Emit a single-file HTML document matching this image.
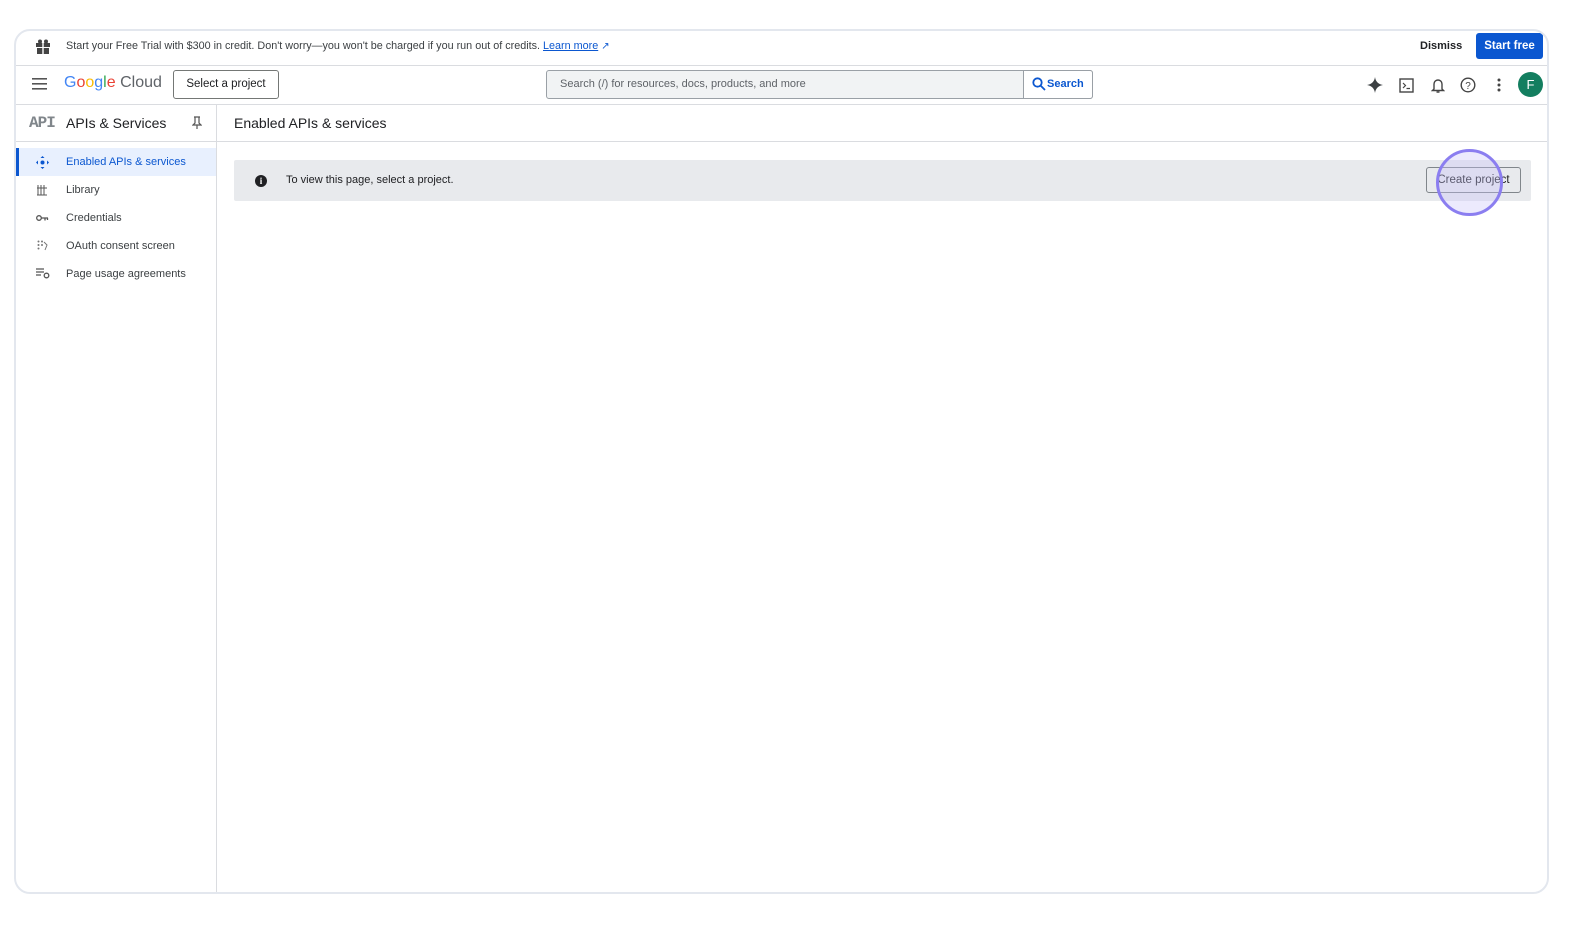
<!DOCTYPE html>
<html><head><style>
*{box-sizing:border-box;margin:0;padding:0}
body{width:1596px;height:942px;background:#fff;font-family:"Liberation Sans",Arial,sans-serif;position:relative;overflow:hidden;color:#3c4043}
.frame{position:absolute;left:14px;top:29px;width:1535px;height:865px;border:2px solid #e3e7ee;border-radius:16px;overflow:hidden;background:#fff}
.abs{position:absolute}
.t{font-size:11px;color:#3c4043;white-space:nowrap}
.hl{position:absolute;left:0;right:0;height:1px;background:#dadce0}
</style></head><body>
<div class="frame">
 <svg class="abs" style="left:19px;top:8px" width="16" height="16" viewBox="0 0 16 16"><rect x="1" y="4" width="14" height="4" fill="#444"/><rect x="2" y="9" width="12" height="6" fill="#444"/><rect x="7.3" y="3" width="1.4" height="13" fill="#fff"/><circle cx="5" cy="2.5" r="2" fill="#444"/><circle cx="11" cy="2.5" r="2" fill="#444"/></svg>
 <div class="abs t" style="left:50px;top:9px;font-size:10.8px">Start your Free Trial with $300 in credit. Don't worry—you won't be charged if you run out of credits. <span style="color:#0b57d0;text-decoration:underline">Learn more</span> <span style="color:#0b57d0;font-size:10px">↗</span></div>
 <div class="abs t" style="left:1404px;top:9px;color:#202124;font-weight:bold">Dismiss</div>
 <div class="abs" style="left:1460px;top:2px;width:67px;height:26px;background:#0b57d0;border-radius:3px;color:#fff;font-size:11.5px;font-weight:bold;text-align:center;line-height:26px">Start free</div>
 <div class="hl" style="top:34px"></div>
 <svg class="abs" style="left:16px;top:47px" width="16" height="12"><rect y="0" width="15" height="1.6" fill="#555"/><rect y="5" width="15" height="1.6" fill="#555"/><rect y="10" width="15" height="1.6" fill="#555"/></svg>
 <div class="abs" style="left:48px;top:43px;font-size:16px;white-space:nowrap"><span style="color:#4285f4">G</span><span style="color:#ea4335">o</span><span style="color:#fbbc04">o</span><span style="color:#4285f4">g</span><span style="color:#34a853">l</span><span style="color:#ea4335">e</span> <span style="color:#5f6368">Cloud</span></div>
 <div class="abs" style="left:157px;top:39px;width:106px;height:29px;border:1px solid #747775;border-radius:3px;font-size:11.5px;color:#202124;text-align:center;line-height:27px">Select a project</div>
 <div class="abs" style="left:530px;top:39px;width:547px;height:29px;border:1px solid #9aa0a6;border-radius:3px;background:#f1f3f4"></div>
 <div class="abs t" style="left:544px;top:47px;color:#5f6368">Search (/) for resources, docs, products, and more</div>
 <div class="abs" style="left:1007px;top:39px;width:70px;height:29px;border:1px solid #9aa0a6;border-radius:0 3px 3px 0;background:#fff"></div>
 <svg class="abs" style="left:1016px;top:46px" width="14" height="14"><circle cx="5.5" cy="5.5" r="4.2" fill="none" stroke="#0b57d0" stroke-width="1.8"/><line x1="8.5" y1="8.5" x2="13" y2="13" stroke="#0b57d0" stroke-width="1.8"/></svg>
 <div class="abs t" style="left:1031px;top:47px;color:#0b57d0;font-weight:bold">Search</div>
 <svg class="abs" style="left:1351px;top:46px" width="16" height="16" viewBox="0 0 16 16"><path d="M8 0C8.6 4.5 11.5 7.4 16 8 11.5 8.6 8.6 11.5 8 16 7.4 11.5 4.5 8.6 0 8 4.5 7.4 7.4 4.5 8 0Z" fill="#3c4043"/></svg>
 <svg class="abs" style="left:1383px;top:47px" width="15" height="15"><rect x="1" y="1" width="13" height="13" fill="none" stroke="#444" stroke-width="1.4"/><path d="M4 5l2.5 2.5L4 10M7.5 10.5h3.5" fill="none" stroke="#444" stroke-width="1.2"/></svg>
 <svg class="abs" style="left:1415px;top:46px" width="14" height="17"><path d="M3 12V7a4 4 0 0 1 8 0v5l1.5 1.5h-11Z" fill="none" stroke="#444" stroke-width="1.4"/><path d="M5.5 15h3" stroke="#444" stroke-width="1.4"/></svg>
 <svg class="abs" style="left:1444px;top:46px" width="16" height="16"><circle cx="8" cy="8" r="6.8" fill="none" stroke="#444" stroke-width="1.4"/><text x="8" y="12" font-size="10" text-anchor="middle" fill="#444" font-family="Liberation Sans">?</text></svg>
 <svg class="abs" style="left:1481px;top:47px" width="4" height="14"><circle cx="2" cy="2" r="1.5" fill="#444"/><circle cx="2" cy="7" r="1.5" fill="#444"/><circle cx="2" cy="12" r="1.5" fill="#444"/></svg>
 <div class="abs" style="left:1502px;top:41px;width:25px;height:25px;border-radius:50%;background:#137e5f;color:#fff;font-size:13px;text-align:center;line-height:25px">F</div>
 <div class="hl" style="top:73px"></div>
 <div class="abs" style="left:200px;top:73px;width:1px;height:800px;background:#dadce0"></div>
 <div class="abs" style="left:13px;top:83px;font-size:16px;font-weight:bold;color:#80868b;font-family:'Liberation Mono',monospace;letter-spacing:-1px">API</div>
 <div class="abs" style="left:50px;top:84px;font-size:14px;color:#202124;white-space:nowrap">APIs &amp; Services</div>
 <svg class="abs" style="left:176px;top:85px" width="10" height="13"><path d="M2 1h6M3 1v6L1 9h8L7 7V1M5 9v4" fill="none" stroke="#555" stroke-width="1.2"/></svg>
 <div class="abs" style="left:0;top:110px;width:200px;height:1px;background:#dadce0"></div>
 <div class="abs" style="left:201px;top:110px;right:0;height:1px;background:#dadce0"></div>
 <div class="abs" style="left:218px;top:84px;font-size:14px;color:#202124;white-space:nowrap">Enabled APIs &amp; services</div>
 <div class="abs" style="left:0;top:117px;width:200px;height:28px;background:#e8f0fe;border-left:3px solid #0b57d0"></div>
 <svg class="abs" style="left:20px;top:125px" width="13" height="13"><circle cx="6.5" cy="6.5" r="2" fill="#0b57d0"/><path d="M6.5 0l2 2h-4zM6.5 13l2-2h-4zM0 6.5l2-2v4zM13 6.5l-2-2v4z" fill="#0b57d0"/></svg>
 <div class="abs t" style="left:50px;top:125px;color:#0b57d0">Enabled APIs &amp; services</div>
 <svg class="abs" style="left:21px;top:153px" width="10" height="12"><path d="M1 1v10M4 1v10M7 1v10M0 4h10M0 11h10" stroke="#555" stroke-width="1"/></svg>
 <div class="abs t" style="left:50px;top:153px">Library</div>
 <svg class="abs" style="left:20px;top:183px" width="13" height="8"><circle cx="3" cy="4" r="2.3" fill="none" stroke="#555" stroke-width="1.3"/><path d="M5 4h7M9 4v2.5M11.5 4v2" stroke="#555" stroke-width="1.3"/></svg>
 <div class="abs t" style="left:50px;top:181px">Credentials</div>
 <svg class="abs" style="left:21px;top:209px" width="11" height="11" fill="#777"><circle cx="1.5" cy="1.5" r="1"/><circle cx="5" cy="1.5" r="1"/><circle cx="1.5" cy="5" r="1"/><circle cx="5" cy="5" r="1"/><circle cx="1.5" cy="8.5" r="1"/><path d="M7 2l3 3-2 5" stroke="#777" fill="none"/></svg>
 <div class="abs t" style="left:50px;top:209px">OAuth consent screen</div>
 <svg class="abs" style="left:20px;top:237px" width="14" height="11"><path d="M0 1h8M0 4h8M0 7h5" stroke="#555" stroke-width="1.2"/><circle cx="10.5" cy="7.5" r="2.3" fill="none" stroke="#555" stroke-width="1.3"/></svg>
 <div class="abs t" style="left:50px;top:237px">Page usage agreements</div>
 <div class="abs" style="left:218px;top:129px;width:1297px;height:41px;background:#e8eaed;border-radius:2px"></div>
 <div class="abs" style="left:239px;top:144px;width:12px;height:12px;border-radius:50%;background:#202124;color:#fff;font-size:9px;font-weight:bold;text-align:center;line-height:12px;font-family:'Liberation Serif',serif">i</div>
 <div class="abs t" style="left:270px;top:143px;color:#202124">To view this page, select a project.</div>
 <div class="abs" style="left:1410px;top:136px;width:95px;height:26px;border:1px solid #80868b;border-radius:3px;font-size:11.5px;color:#202124;text-align:center;line-height:24px">Create project</div>
 <div class="abs" style="left:1420px;top:118px;width:67px;height:67px;border-radius:50%;border:3px solid #8b7ef0;background:rgba(200,195,250,0.35)"></div>
</div>
</body></html>
